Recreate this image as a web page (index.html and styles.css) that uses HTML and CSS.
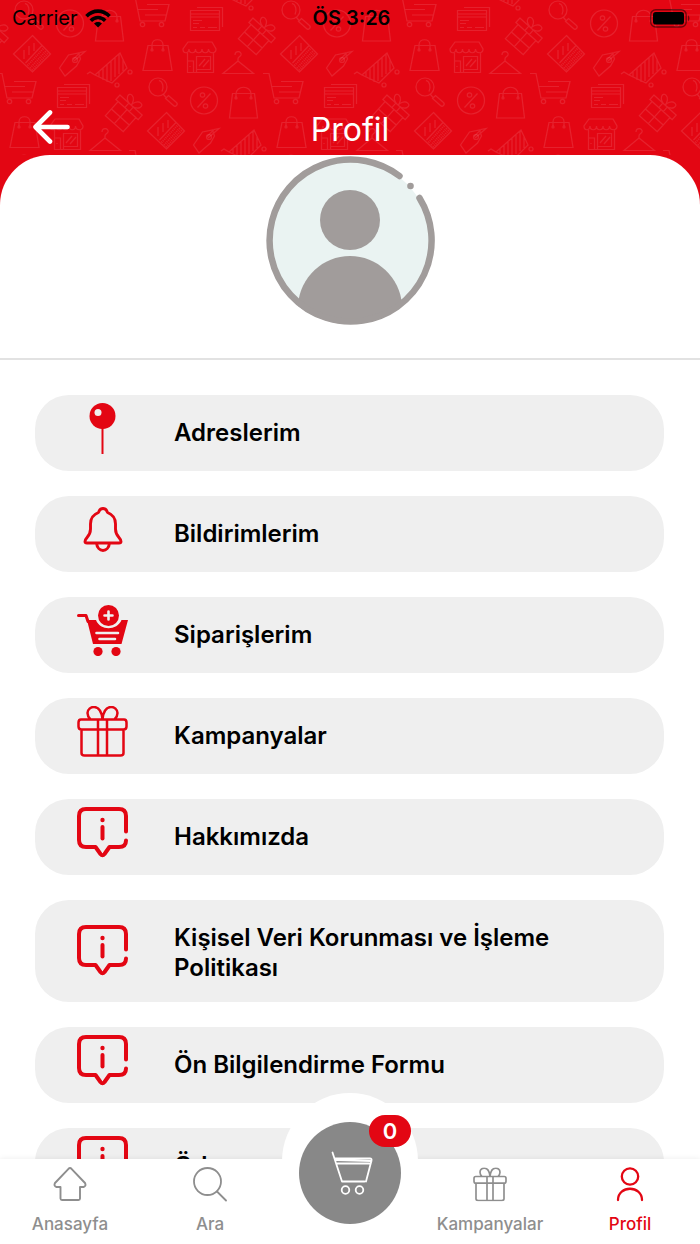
FILE: index.html
```html
<!DOCTYPE html>
<html lang="tr">
<head>
<meta charset="utf-8">
<meta name="viewport" content="width=device-width, initial-scale=1">
<title>Profil</title>
<link rel="stylesheet" href="styles.css">
</head>
<body>
<svg class="defs" aria-hidden="true">
  <defs>
    <g id="strip" fill="none" stroke="#fff" stroke-opacity=".11" stroke-width="1.2">
      <path d="M-4 73.500H2L7 98H32L36 81.500H14M4 86.500H25M12 92H33"/>
      <circle cx="9.500" cy="101.500" r="2.200"/><circle cx="28.500" cy="101.500" r="2.200"/>
      <path d="M57.500 87.500h29v20h-29zM57.500 91h29M57.500 94h29M60 97.500h9M60 100.500h6M60 104.500h4M67 104.500h5M75 104.500h9M64 84.500h25.500v19.500"/>
      <g transform="translate(123 114) rotate(42)">
        <path d="M-12-6h24v19h-24zM-15-12h30v6h-30zM0-6v19M-12 4h24M-3-12v6M3-12v6M0-12c-9 0-11-8-6-8 4 0 6 5 6 8 0-3 2-8 6-8 5 0 3 8-6 8"/>
      </g>
      <circle cx="158" cy="87" r="9"/><path d="M159 80.500c4 1 5 7 3 11M163.500 94.500l2.500 3M165.500 98.500l3-3 8 7c2 2-1 5-3 3z"/>
      <circle cx="204" cy="100.500" r="13.500"/><path d="M197.500 107.500l13-14"/><circle cx="202.500" cy="95" r="2.200"/><circle cx="205.500" cy="106" r="2.200"/>
      <path d="M232.500 93.500h22l3 24.500h-28zM236 97v-3c0-9 15-9 15 0v3"/><circle cx="236" cy="98" r="1"/><circle cx="251" cy="98" r="1"/>
      <path d="M15 122.500h20l4 25H10zM19 126v-4c0-7 11-7 11 0v4"/><circle cx="19" cy="127" r="1"/><circle cx="30" cy="127" r="1"/>
      <path d="M55 119h24l4 7c0 5-7 5-7.500 0 0 5-6.500 5-6.500 0 0 5-6.500 5-6.500 0 0 5-6.500 5-6.500 0-.5 5-6 5-6 0zM54.500 130v19.500h26V130M63.500 149.500V133.500h14v13h-14M54.500 138h6v11M66 143l6-7M70 144l6-7M57 143v1"/>
      <path d="M102 132c0-5 7-4 6 0-1 2-3 2-3 4v2L90 150.500h30.500L105 138"/>
      <path d="M166.500 112.500l18 18.500-18 18-19-18zM159.500 140l16.500-17.500M158 127v9M163 123v9M168 120v8"/>
      <path stroke-dasharray="1 1" stroke-width="2" d="M161.500 142.500l16-17M164 145l16-17M166 147l16-17"/>
      <path d="M193.500 145l9-13 10-2 2 6-4 7-11.500 10zM208 138l11-9.500-5 1-7 7"/><circle cx="209" cy="137" r="2.500"/>
      <path d="M221 151l3-2 5 3 25-22 7 15-15 15-17-8M233 148v6M237 145v12M241 141v18M245 138v20M249 134v20M253 131v20M257 136v12"/>
      <circle cx="264" cy="149" r="2"/><circle cx="251" cy="162" r="2"/>
    </g>
    <pattern id="shopping" width="267" height="154" patternUnits="userSpaceOnUse" patternTransform="translate(0 -4)">
      <g transform="translate(0 4)">
        <use href="#strip"/><use href="#strip" x="-267"/><use href="#strip" x="267"/>
        <use href="#strip" x="133" y="-77"/><use href="#strip" x="-134" y="-77"/>
        <use href="#strip" x="133" y="77"/><use href="#strip" x="-134" y="77"/>
        <use href="#strip" y="-154"/><use href="#strip" x="-267" y="-154"/>
      </g>
    </pattern>
    <symbol id="info" viewBox="0 0 51 51">
      <g fill="none" stroke="#e30613" stroke-width="4" stroke-linecap="round" stroke-linejoin="round">
        <path d="M49 24.500V9q0-7-7-7H9Q2 2 2 9v24q0 7 7 7h9.500l5 7q2 2.500 4 0l5-7H42q7 0 7-6.500"/>
        <path d="M25.500 20v11.500"/>
      </g>
      <circle cx="25.500" cy="13" r="2.200" fill="#e30613"/>
    </symbol>
    <symbol id="gift" viewBox="0 0 51 51">
      <path fill="none" stroke="currentColor" stroke-width="2.500" stroke-linejoin="round" d="M4 13.500h43q2.500 0 2.500 3v4q0 3-3 3h-42q-3 0-3-3v-4q0-3 2.500-3zM4.500 23.500V47q0 2.500 3 2.500h36q3 0 3-2.500V23.500M21 13.500v36M30 13.500v36M25.500 13c-2-17-15-13-15-6 0 3 1.500 5 3 6.500M25.500 13c2-17 15-13 15-6 0 3-1.500 5-3 6.500"/>
    </symbol>
  </defs>
</svg>

<div class="app">
  <header class="header">
    <svg class="header__pattern" aria-hidden="true"><rect width="100%" height="100%" fill="url(#shopping)"/></svg>
    <div class="status">
      <div class="status__carrier">
        <span>Carrier</span>
        <svg width="26" height="19" viewBox="0 0 26 19" aria-hidden="true">
          <g fill="none" stroke="#000" stroke-width="3.600"><path d="M1.500 7.200C8 .4 18 .4 24.500 7.200"/><path d="M5.800 11.700C10 7.500 16 7.500 20.200 11.700"/></g>
          <path d="M9 14.500q4-3.500 8 0L13 18.500z"/>
        </svg>
      </div>
      <div class="status__time">ÖS 3:26</div>
      <svg class="status__battery" width="41" height="19" viewBox="0 0 41 19" aria-hidden="true">
        <rect x=".7" y=".7" width="35.500" height="17.300" rx="5" fill="none" stroke="#000" stroke-opacity=".5" stroke-width="1.400"/>
        <rect x="3" y="3" width="31" height="12.500" rx="2.800"/><path d="M38 6q3 3.300 0 6.600z" fill-opacity=".5"/>
      </svg>
    </div>
    <div class="titlebar">
      <button class="back" type="button" aria-label="Geri">
        <svg width="38" height="34" viewBox="0 0 38 34"><path d="M18 2.500 3.500 17 18 31.500M4 17h31.500" fill="none" stroke="#fff" stroke-width="4.600" stroke-linecap="round" stroke-linejoin="round"/></svg>
      </button>
      <h1 class="title">Profil</h1>
    </div>
  </header>

  <main class="sheet">
    <div class="profile">
      <svg width="170" height="170" viewBox="0 0 170 170" role="img" aria-label="Profil resmi">
        <clipPath id="face"><circle cx="85" cy="85" r="84"/></clipPath>
        <circle cx="85" cy="85" r="80" fill="#eaf3f2"/>
        <g clip-path="url(#face)" fill="#a19c9b"><circle cx="85" cy="65" r="30"/><path d="M33 150C35 122 58 101 85 101s50 21 52 49v20H33z"/></g>
        <path d="M134.500 21A81 81 0 1 0 154.500 43" fill="none" stroke="#a19c9b" stroke-width="6.500" stroke-linecap="round"/>
        <circle cx="145.500" cy="31" r="3.300" fill="#a19c9b"/>
      </svg>
    </div>
    <ul class="menu">
      <li><a class="item" href="#"><span class="item__icon">
        <svg width="51" height="51" viewBox="0 0 51 51"><path d="M25.500 24v27" stroke="#e30613" stroke-width="2"/><circle cx="25.500" cy="13" r="13" fill="#e30613"/><circle cx="21" cy="9.500" r="3.500" fill="#efefef"/></svg>
      </span><span>Adreslerim</span></a></li>
      <li><a class="item" href="#"><span class="item__icon">
        <svg width="51" height="51" viewBox="0 0 51 51" fill="none" stroke="#e30613" stroke-width="2.900" stroke-linejoin="round"><path d="M26 4.500q-3.500 0-4.500 4C15 11 13.500 15 13.500 20v5c0 8-5.500 8.500-5.500 12.500 0 1.500 1 1.500 2 1.500h32c1 0 2 0 2-1.500 0-4-5.500-4.500-5.500-12.500v-5c0-5-1.500-9-8-11.500q-1-4-4.500-4zM19.500 39c1 10 12 10 13 0"/></svg>
      </span><span>Bildirimlerim</span></a></li>
      <li><a class="item" href="#"><span class="item__icon">
        <svg width="51" height="51" viewBox="0 0 51 51"><path d="M1.500 10.500H9l2 6" fill="none" stroke="#e30613" stroke-width="3" stroke-linecap="round" stroke-linejoin="round"/><path d="M10 15h9c4 11 21 11 25.500 0H51l-6.500 24H16z" fill="#e30613"/><circle cx="31.500" cy="10.500" r="10.500" fill="#e30613"/><path d="M31.500 6.500v8M27.500 10.500h8M19.500 28H41M22.500 34H38" stroke="#efefef" stroke-width="2.600" stroke-linecap="round"/><circle cx="21" cy="46.500" r="4.600" fill="#e30613"/><circle cx="39" cy="46.500" r="4.600" fill="#e30613"/></svg>
      </span><span>Siparişlerim</span></a></li>
      <li><a class="item" href="#"><span class="item__icon"><svg width="51" height="51"><use href="#gift"/></svg></span><span>Kampanyalar</span></a></li>
      <li><a class="item" href="#"><span class="item__icon"><svg width="51" height="51"><use href="#info"/></svg></span><span>Hakkımızda</span></a></li>
      <li><a class="item item--tall" href="#"><span class="item__icon"><svg width="51" height="51"><use href="#info"/></svg></span><span>Kişisel Veri Korunması ve İşleme Politikası</span></a></li>
      <li><a class="item" href="#"><span class="item__icon"><svg width="51" height="51"><use href="#info"/></svg></span><span>Ön Bilgilendirme Formu</span></a></li>
      <li><a class="item" href="#"><span class="item__icon"><svg width="51" height="51"><use href="#info"/></svg></span><span>Ödeme</span></a></li>
    </ul>
  </main>

  <nav class="tabs">
    <a class="tab" href="#">
      <svg width="34" height="35" viewBox="0 0 34 35"><path d="M15.500 1.800q1.500-1.400 3 0L32 16q1.500 3-1.500 4H27v11.500q0 1.500-1.500 1.500H9q-1.500 0-1.500-1.500V20H3.500q-3-1-1.500-4z" fill="none" stroke="currentColor" stroke-width="1.900" stroke-linejoin="round"/></svg>
      <span>Anasayfa</span>
    </a>
    <a class="tab" href="#">
      <svg width="34" height="35" viewBox="0 0 34 35" fill="none" stroke="currentColor" stroke-width="1.800" stroke-linecap="round"><circle cx="14.500" cy="14.500" r="13.500"/><path d="M24 24.500l9 9"/></svg>
      <span>Ara</span>
    </a>
    <a class="cart" href="#" aria-label="Sepet">
      <span class="cart__disc">
        <svg width="44" height="46" viewBox="0 0 44 46" fill="none" stroke="#fff" stroke-width="1.800" stroke-linecap="round" stroke-linejoin="round"><path d="M2.500 2.500l9.500 29H34.500M5 8.500h35q2 0 1.500 2L36 31.500M6.500 10l35 1M7.500 13.500h32"/><circle cx="15.500" cy="40" r="3.800"/><circle cx="29.500" cy="40" r="3.800"/></svg>
      </span>
      <span class="cart__badge">0</span>
    </a>
    <a class="tab" href="#"><svg width="34" height="35" viewBox="0 0 51 51"><use href="#gift"/></svg><span>Kampanyalar</span></a>
    <a class="tab tab--active" href="#" aria-current="page">
      <svg width="34" height="35" viewBox="0 0 34 35" fill="none" stroke="currentColor" stroke-width="2.300" stroke-linecap="round"><circle cx="17" cy="9.500" r="8.200"/><path d="M5 33c0-15 24-15 24 0"/></svg>
      <span>Profil</span>
    </a>
  </nav>
</div>
</body>
</html>
```
FILE: styles.css
```css
* {
  box-sizing: border-box;
}

body {
  margin: 0;
  background: #fff;
  color: #000;
  font-family: Inter, "Liberation Sans", sans-serif;
}

a {
  color: inherit;
  text-decoration: none;
}

svg {
  display: block;
}

.defs {
  position: absolute;
  width: 0;
  height: 0;
}

.app {
  display: flex;
  flex-direction: column;
  height: 100vh;
}

.header {
  position: relative;
  flex: none;
  padding-bottom: 56px;
  background: #e30613;
}

.header__pattern {
  position: absolute;
  top: 0;
  left: 0;
  width: 100%;
  height: 155px;
}

.status {
  position: relative;
  display: grid;
  grid-template-columns: 1fr auto 1fr;
  align-items: center;
  height: 36px;
  padding: 0 9px 0 12px;
  font-size: 20px;
}

.status__carrier {
  display: flex;
  align-items: center;
  gap: 7px;
}

.status__time {
  font-weight: 600;
}

.status__battery {
  justify-self: end;
}

.titlebar {
  position: relative;
  display: grid;
  grid-template-columns: 1fr auto 1fr;
  align-items: start;
  margin-top: 74px;
  padding: 0 32px;
}

.back {
  justify-self: start;
  padding: 0;
  border: 0;
  background: none;
}

.title {
  margin: 0;
  color: #fff;
  font-size: 32px;
  font-weight: 400;
  line-height: 40px;
}

.sheet {
  position: relative;
  flex: 1;
  min-height: 0;
  margin-top: -51px;
  overflow: hidden;
  border-radius: 50px 50px 0 0;
  background: #fff;
}

.profile {
  display: flex;
  justify-content: center;
  padding-bottom: 33px;
  border-bottom: 2px solid #e2e2e2;
}

.menu {
  display: flex;
  flex-direction: column;
  gap: 25px;
  margin: 0;
  padding: 35px 36px 25px 35px;
  list-style: none;
}

.item {
  display: flex;
  align-items: center;
  gap: 46px;
  min-height: 76px;
  padding: 8px 42px;
  border-radius: 34px;
  background: #efefef;
  font-size: 24px;
  font-weight: 600;
  line-height: 30px;
}

.item__icon {
  flex: none;
  padding-bottom: 9px;
  color: #e30613;
}

.item--tall {
  padding: 23px 42px 19px;
}

.item--tall .item__icon {
  padding-bottom: 5px;
}

.tabs {
  position: relative;
  flex: none;
  display: grid;
  grid-template-columns: repeat(5, 1fr);
  height: 85px;
  background: #fff;
  box-shadow: 0 0 6px rgba(0, 0, 0, 0.08);
}

.tab {
  display: flex;
  flex-direction: column;
  align-items: center;
  gap: 12px;
  padding-top: 8px;
  color: #8e8e8e;
  font-size: 17px;
  font-weight: 500;
  line-height: 20px;
}

.tab--active {
  color: #e30613;
}

.cart {
  position: relative;
  justify-self: center;
  display: flex;
  justify-content: center;
  width: 136px;
  height: 136px;
  margin-top: -66px;
  padding-top: 29px;
  border-radius: 50%;
  background: #fff;
}

.cart__disc {
  display: flex;
  align-items: center;
  justify-content: center;
  width: 102px;
  height: 102px;
  padding-left: 4px;
  border-radius: 50%;
  background: #888;
}

.cart__badge {
  position: absolute;
  top: 22px;
  right: 7px;
  width: 42px;
  border-radius: 16px;
  background: #e30613;
  color: #fff;
  font-size: 22px;
  font-weight: 600;
  line-height: 32px;
  text-align: center;
}
```
